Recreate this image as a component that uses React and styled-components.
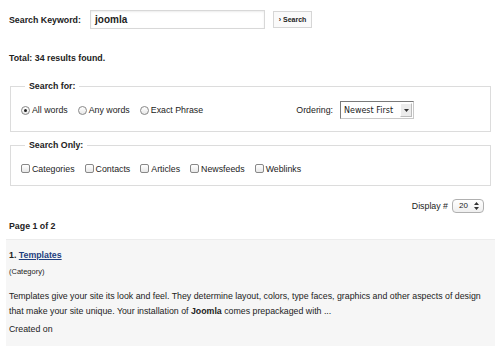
import React from "react";
import styled, { createGlobalStyle } from "styled-components";

const Global = createGlobalStyle`
  html, body { margin: 0; padding: 0; background: #fff; }
  body { font-family: "Liberation Sans", Arial, Helvetica, sans-serif; font-size: 8.8px; color: #222; }
`;

const Page = styled.div`
  width: 500px;
  height: 346px;
  overflow: hidden;
  padding-top: 10px;
  box-sizing: border-box;
`;

const KeywordRow = styled.div`
  display: flex;
  align-items: center;
  padding-left: 9px;
  height: 19px;
`;

const Label = styled.label`
  font-weight: bold;
  width: 81px;
`;

const TextInput = styled.div`
  width: 175px;
  height: 19px;
  box-sizing: border-box;
  border: 1px solid #d8d8d8;
  box-shadow: inset 0 1px 2px rgba(0,0,0,0.08);
  font-weight: bold;
  font-size: 10px;
  padding-left: 4px;
  display: flex;
  align-items: center;
`;

const Button = styled.div`
  margin-left: 8px;
  width: 39px;
  height: 17px;
  box-sizing: border-box;
  border: 1px solid #d6d6d6;
  background: #fafafa;
  font-size: 7px;
  font-weight: bold;
  display: flex;
  align-items: center;
  justify-content: center;
  gap: 2px;
`;

const Total = styled.div`
  font-weight: bold;
  padding-left: 9px;
  margin-top: 24px;
  line-height: 11px;
`;

const Fieldset = styled.fieldset`
  margin: ${p => p.$top}px 9px 0 10px;
  border: 1px solid #dcdcdc;
  padding: 0 8px 0 10px;
  height: ${p => p.$h}px;
  box-sizing: border-box;
  display: flex;
  align-items: center;
`;

const Legend = styled.legend`
  font-weight: bold;
  padding: 0 4px;
  margin-left: 4px;
  line-height: 10px;
`;

const Options = styled.div`
  display: flex;
  align-items: center;
  flex: 1;
  gap: ${p => p.$gap}px;
  margin-top: ${p => p.$mt}px;
`;

const Option = styled.span`
  display: inline-flex;
  align-items: center;
  gap: 2px;
`;

const Radio = styled.span`
  width: 9px;
  height: 9px;
  box-sizing: border-box;
  border-radius: 50%;
  border: 1px solid #888;
  background: linear-gradient(#fff, #e8e8e8);
  display: inline-flex;
  align-items: center;
  justify-content: center;
  &::after {
    content: "";
    width: 3px;
    height: 3px;
    border-radius: 50%;
    background: ${p => (p.$on ? "#222" : "transparent")};
  }
`;

const Check = styled.span`
  width: 9px;
  height: 9px;
  box-sizing: border-box;
  border-radius: 2px;
  border: 1px solid #888;
  background: linear-gradient(#fff, #e8e8e8);
`;

const Spacer = styled.div`
  flex: 1;
`;

const Ordering = styled.div`
  display: flex;
  align-items: center;
  gap: 7px;
  margin-right: 68px;
`;

const WinSelect = styled.div`
  width: 74px;
  height: 18px;
  box-sizing: border-box;
  border: 1px solid #7a7a7a;
  border-right-color: #c8c8c8;
  border-bottom-color: #c8c8c8;
  background: #fff;
  display: flex;
  align-items: stretch;
  font-family: "DejaVu Sans", Verdana, sans-serif;
  font-size: 8px;
`;

const SelText = styled.span`
  flex: 1;
  display: flex;
  align-items: center;
  padding-left: 3px;
`;

const SelArrow = styled.span`
  width: 10px;
  margin: 1px;
  background: #ececec;
  border: 1px solid #bbb;
  border-top-color: #fff;
  border-left-color: #fff;
  display: flex;
  align-items: center;
  justify-content: center;
`;

const DisplayRow = styled.div`
  display: flex;
  justify-content: flex-end;
  align-items: center;
  gap: 4px;
  padding-right: 16px;
  margin-top: 12px;
  height: 15px;
`;

const MacSelect = styled.div`
  width: 32px;
  height: 14px;
  box-sizing: border-box;
  border: 1px solid #b0b0b0;
  border-radius: 4px;
  background: linear-gradient(#fff, #efefef);
  display: flex;
  align-items: center;
  justify-content: space-between;
  padding: 0 4px 0 6px;
  font-size: 8px;
`;

const PageInfo = styled.div`
  font-weight: bold;
  padding-left: 9px;
  margin-top: 8px;
  line-height: 11px;
`;

const Result = styled.div`
  margin: 7px 5px 0 6px;
  background: #f6f6f6;
  border-top: 1px solid #ececec;
  padding: 10px 3px 20px 3px;
  height: 120px;
`;

const Title = styled.div`
  font-weight: bold;
  line-height: 11px;
  a { color: #1f3f7f; text-decoration: underline; }
`;

const Category = styled.div`
  font-size: 7.5px;
  margin-top: 5px;
  line-height: 11px;
`;

const Body = styled.p`
  margin: 12px 0 0;
  line-height: 15px;
  padding-right: 6px;
  b { font-weight: bold; }
`;

const Created = styled.div`
  margin-top: 3px;
  line-height: 15px;
`;

const DownArrow = () => (
  <svg width="5" height="3" viewBox="0 0 5 3"><path d="M0 0h5L2.5 3z" fill="#333" /></svg>
);

const UpDown = () => (
  <svg width="5" height="8" viewBox="0 0 5 8">
    <path d="M0 3h5L2.5 0z M0 5h5L2.5 8z" fill="#333" />
  </svg>
);

export default function App() {
  return (
    <Page>
      <Global />
      <KeywordRow>
        <Label>Search Keyword:</Label>
        <TextInput>joomla</TextInput>
        <Button><span>›</span>Search</Button>
      </KeywordRow>
      <Total>Total: 34 results found.</Total>

      <Fieldset $top={17} $h={51}>
        <Legend>Search for:</Legend>
        <Options $gap={10} $mt={-2}>
          <Option><Radio $on />All words</Option>
          <Option><Radio />Any words</Option>
          <Option><Radio />Exact Phrase</Option>
          <Spacer />
          <Ordering>
            Ordering:
            <WinSelect>
              <SelText>Newest First</SelText>
              <SelArrow><DownArrow /></SelArrow>
            </WinSelect>
          </Ordering>
        </Options>
      </Fieldset>

      <Fieldset $top={8} $h={46}>
        <Legend>Search Only:</Legend>
        <Options $gap={10} $mt={2}>
          <Option><Check />Categories</Option>
          <Option><Check />Contacts</Option>
          <Option><Check />Articles</Option>
          <Option><Check />Newsfeeds</Option>
          <Option><Check />Weblinks</Option>
        </Options>
      </Fieldset>

      <DisplayRow>
        Display #
        <MacSelect>
          20
          <UpDown />
        </MacSelect>
      </DisplayRow>

      <PageInfo>Page 1 of 2</PageInfo>

      <Result>
        <Title>1. <a href="#">Templates</a></Title>
        <Category>(Category)</Category>
        <Body>
          Templates give your site its look and feel. They determine layout, colors, type faces, graphics and other aspects of design that make your site unique. Your installation of <b>Joomla</b> comes prepackaged with ...
        </Body>
        <Created>Created on</Created>
      </Result>
    </Page>
  );
}
